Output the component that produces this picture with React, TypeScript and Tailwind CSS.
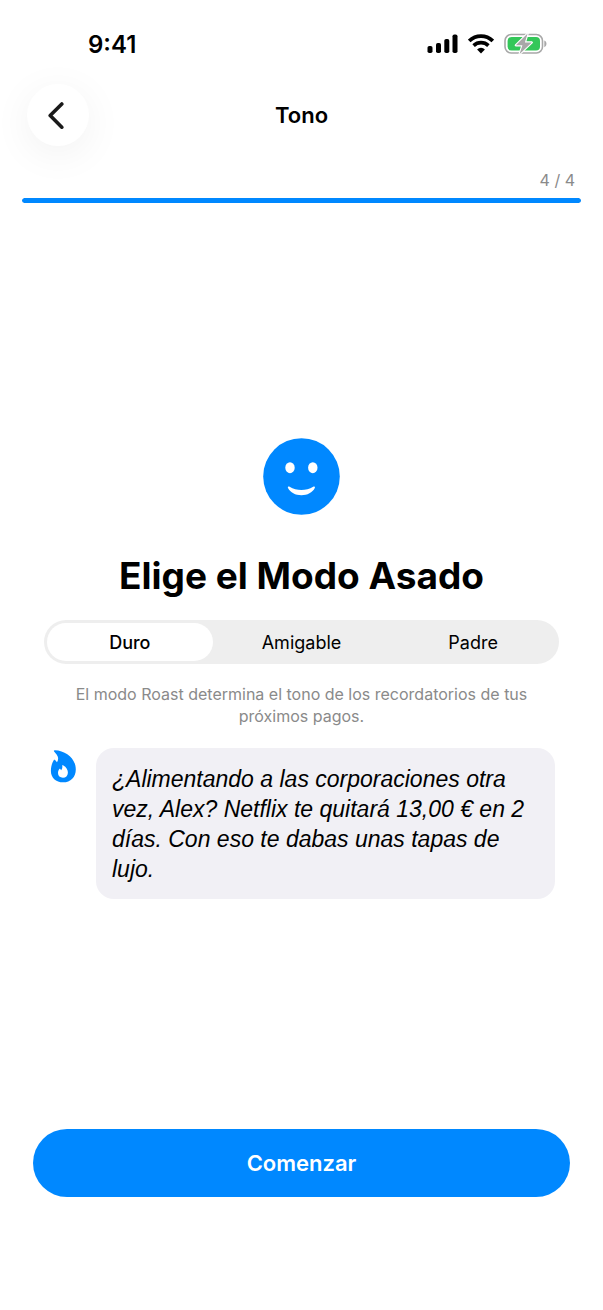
import { useState } from 'react'
import clsx from 'clsx'

const TONES = [
    {
        id: 'duro',
        label: 'Duro',
        message:
            '¿Alimentando a las corporaciones otra vez, Alex? Netflix te quitará 13,00 € en 2 días. Con eso te dabas unas tapas de lujo.',
    },
    {
        id: 'amigable',
        label: 'Amigable',
        message: '¡Hola, Alex! Netflix te cobrará 13,00 € en 2 días.',
    },
    {
        id: 'padre',
        label: 'Padre',
        message: 'Alex, Netflix te cobrará 13,00 € en 2 días. El dinero no crece en los árboles.',
    },
]

function SignalIcon() {
    return (
        <svg width="31" height="20" viewBox="0 0 31 20" fill="currentColor" aria-hidden="true">
            <rect x="0.5" y="12" width="5" height="7" rx="1.8" />
            <rect x="9" y="9" width="5" height="10" rx="1.8" />
            <rect x="17.3" y="5" width="5" height="14" rx="1.8" />
            <rect x="25.5" y="0.5" width="5" height="18.5" rx="1.8" />
        </svg>
    )
}

function WifiIcon() {
    return (
        <svg width="26" height="20" viewBox="0 0 26 20" fill="none" stroke="currentColor" aria-hidden="true">
            <path d="M1.2 6.9a17 17 0 0 1 23.6 0" strokeWidth="3.8" />
            <path d="M5.6 11.6a10.7 10.7 0 0 1 14.8 0" strokeWidth="3.6" />
            <path d="M13 19.4l-3.9-3.9a5.4 5.4 0 0 1 7.8 0z" fill="currentColor" stroke="none" />
        </svg>
    )
}

function BatteryIcon() {
    return (
        <svg width="43" height="22" viewBox="0 0 43 22" fill="none" aria-hidden="true">
            <rect x="1" y="1.5" width="37.5" height="18.5" rx="6.2" stroke="#a8a8a8" strokeWidth="1.6" />
            <rect x="3.6" y="4" width="32.4" height="13.5" rx="4" fill="#34c759" />
            <path d="M40.3 7.4c2.9 1 2.9 5.8 0 6.8z" fill="#a8a8a8" />
            <path
                d="M23.6 .6L11.8 12.3h6.6L15.6 21 27.8 9.4h-6.9z"
                fill="#a8a8a8"
                stroke="#fff"
                strokeWidth="2.2"
                strokeLinejoin="round"
                paintOrder="stroke"
            />
        </svg>
    )
}

function SmileyIcon() {
    return (
        <svg width="77" height="77" viewBox="0 0 77 77" aria-hidden="true">
            <circle cx="38.5" cy="38.5" r="38.3" fill="#0088ff" />
            <ellipse cx="27" cy="29.7" rx="4.7" ry="5.5" fill="#fff" />
            <ellipse cx="49.8" cy="29.7" rx="4.7" ry="5.5" fill="#fff" />
            <path
                d="M26.6 48.7c7.2 4.3 16.4 4.3 23.6 0 1.1-.6 2.2.2 1.6 1.4-2.4 4.6-7.4 7.2-13.4 7.2s-11-2.6-13.4-7.2c-.6-1.2.5-2 1.6-1.4z"
                fill="#fff"
            />
        </svg>
    )
}

function FlameIcon() {
    return (
        <svg className="mt-0.5 shrink-0" width="26" height="34" viewBox="0 0 26 34" aria-hidden="true">
            <path
                d="M4.100 1.400C3.600.7 3.900.2 4.800.2 16 .6 25.800 8.600 25.800 19.400c0 7.700-5.200 12.900-12.600 12.900C5.800 32.300.9 27.600.9 20.900c0-4.200 1.100-7.900 2.800-10.700.4-.6 1-.6 1.400-.1l1.900 2.200c.8-1.400 1.200-2.800 1.100-4.300C8 5.700 6.100 3.700 4.100 1.400z"
                fill="#0088ff"
            />
            <path
                d="M13 15.200c3.500 1.900 5 4.800 4.900 7.600-.1 3-2.100 5-5 5-2.900 0-4.900-1.900-4.900-4.700 0-1.700.6-3 1.400-4 .3-.4.700-.4.900 0l.8 1.100c1.100-1.400 1.400-2.700 1.200-4.500 0-.5.2-.7.700-.5z"
                fill="#fff"
            />
        </svg>
    )
}

function StatusBar() {
    return (
        <div className="flex h-21 items-center justify-between pt-1 pr-14 pl-22">
            <span className="pt-0.5 text-2xl font-semibold">9:41</span>
            <div className="flex items-center gap-2.5">
                <SignalIcon />
                <WifiIcon />
                <BatteryIcon />
            </div>
        </div>
    )
}

function NavHeader({ title }: { title: string }) {
    return (
        <header className="grid grid-cols-[62px_1fr_62px] items-center px-[27px]">
            <button
                type="button"
                aria-label="Atrás"
                className="flex size-[62px] items-center justify-center rounded-full bg-white pr-1 text-[#1a1a1a] shadow-[0_8px_40px_rgba(0,0,0,0.06)]"
            >
                <svg width="18" height="28" viewBox="0 0 18 28" fill="none" aria-hidden="true">
                    <path
                        d="M14.8 3L3.2 14.6l11.600 11.600"
                        stroke="currentColor"
                        strokeWidth="3.600"
                        strokeLinecap="round"
                        strokeLinejoin="round"
                    />
                </svg>
            </button>
            <h1 className="text-center text-[22px] leading-8 font-semibold">{title}</h1>
        </header>
    )
}

function StepProgress({ step, total }: { step: number; total: number }) {
    return (
        <div className="px-[22px] pt-6">
            <p className="pr-1.5 text-right text-base leading-5 text-[#8a8a8a]">
                {step} / {total}
            </p>
            <div
                role="progressbar"
                aria-label="Progreso"
                aria-valuenow={step}
                aria-valuemin={0}
                aria-valuemax={total}
                className="mt-2 h-[5px] overflow-hidden rounded-full bg-gray-200"
            >
                <div className="h-full rounded-full bg-[#0088ff]" style={{ width: `${(step / total) * 100}%` }} />
            </div>
        </div>
    )
}

interface TonePickerProps {
    value: string
    onChange: (id: string) => void
}

function TonePicker({ value, onChange }: TonePickerProps) {
    return (
        <div role="radiogroup" aria-label="Modo Asado" className="grid h-11 grid-cols-3 rounded-full bg-[#eeeeee]">
            {TONES.map((tone) => (
                <label
                    key={tone.id}
                    className={clsx(
                        'relative m-[3px] flex cursor-pointer items-center justify-center rounded-full pt-0.5 text-lg has-focus-visible:outline-2',
                        value === tone.id ? 'bg-white font-medium' : 'font-normal'
                    )}
                >
                    <input
                        type="radio"
                        name="tone"
                        value={tone.id}
                        checked={value === tone.id}
                        onChange={() => onChange(tone.id)}
                        className="sr-only"
                    />
                    {tone.label}
                </label>
            ))}
        </div>
    )
}

export default function App() {
    const [toneId, setToneId] = useState('duro')
    const tone = TONES.find((t) => t.id === toneId) ?? TONES[0]

    return (
        <div className="flex min-h-screen flex-col bg-white font-['Inter',sans-serif] text-black">
            <StatusBar />
            <NavHeader title="Tono" />
            <StepProgress step={4} total={4} />

            <main className="flex flex-1 flex-col justify-center px-11 pt-1">
                <div className="flex justify-center">
                    <SmileyIcon />
                </div>
                <h2 className="mt-[37px] mb-5 text-center text-[37px] leading-12 font-bold">Elige el Modo Asado</h2>
                <TonePicker value={toneId} onChange={setToneId} />
                <p className="mt-[19px] px-4 text-center text-base leading-[22px] text-[#8a8a8a]">
                    El modo Roast determina el tono de los recordatorios de tus próximos pagos.
                </p>
                <div className="mt-[21px] flex items-start gap-5 pr-1 pl-1.5">
                    <FlameIcon />
                    <p className="flex-1 rounded-[18px] bg-[#f1f0f5] px-4 pt-4 pb-[15px] font-['Liberation_Sans',sans-serif] text-[23px] leading-[30px] italic">
                        {tone.message}
                    </p>
                </div>
            </main>

            <div className="px-[33px] pb-[113px]">
                <button
                    type="button"
                    className="h-[68px] w-full rounded-full bg-[#0088ff] text-[22px] font-semibold text-white"
                >
                    Comenzar
                </button>
            </div>
        </div>
    )
}
